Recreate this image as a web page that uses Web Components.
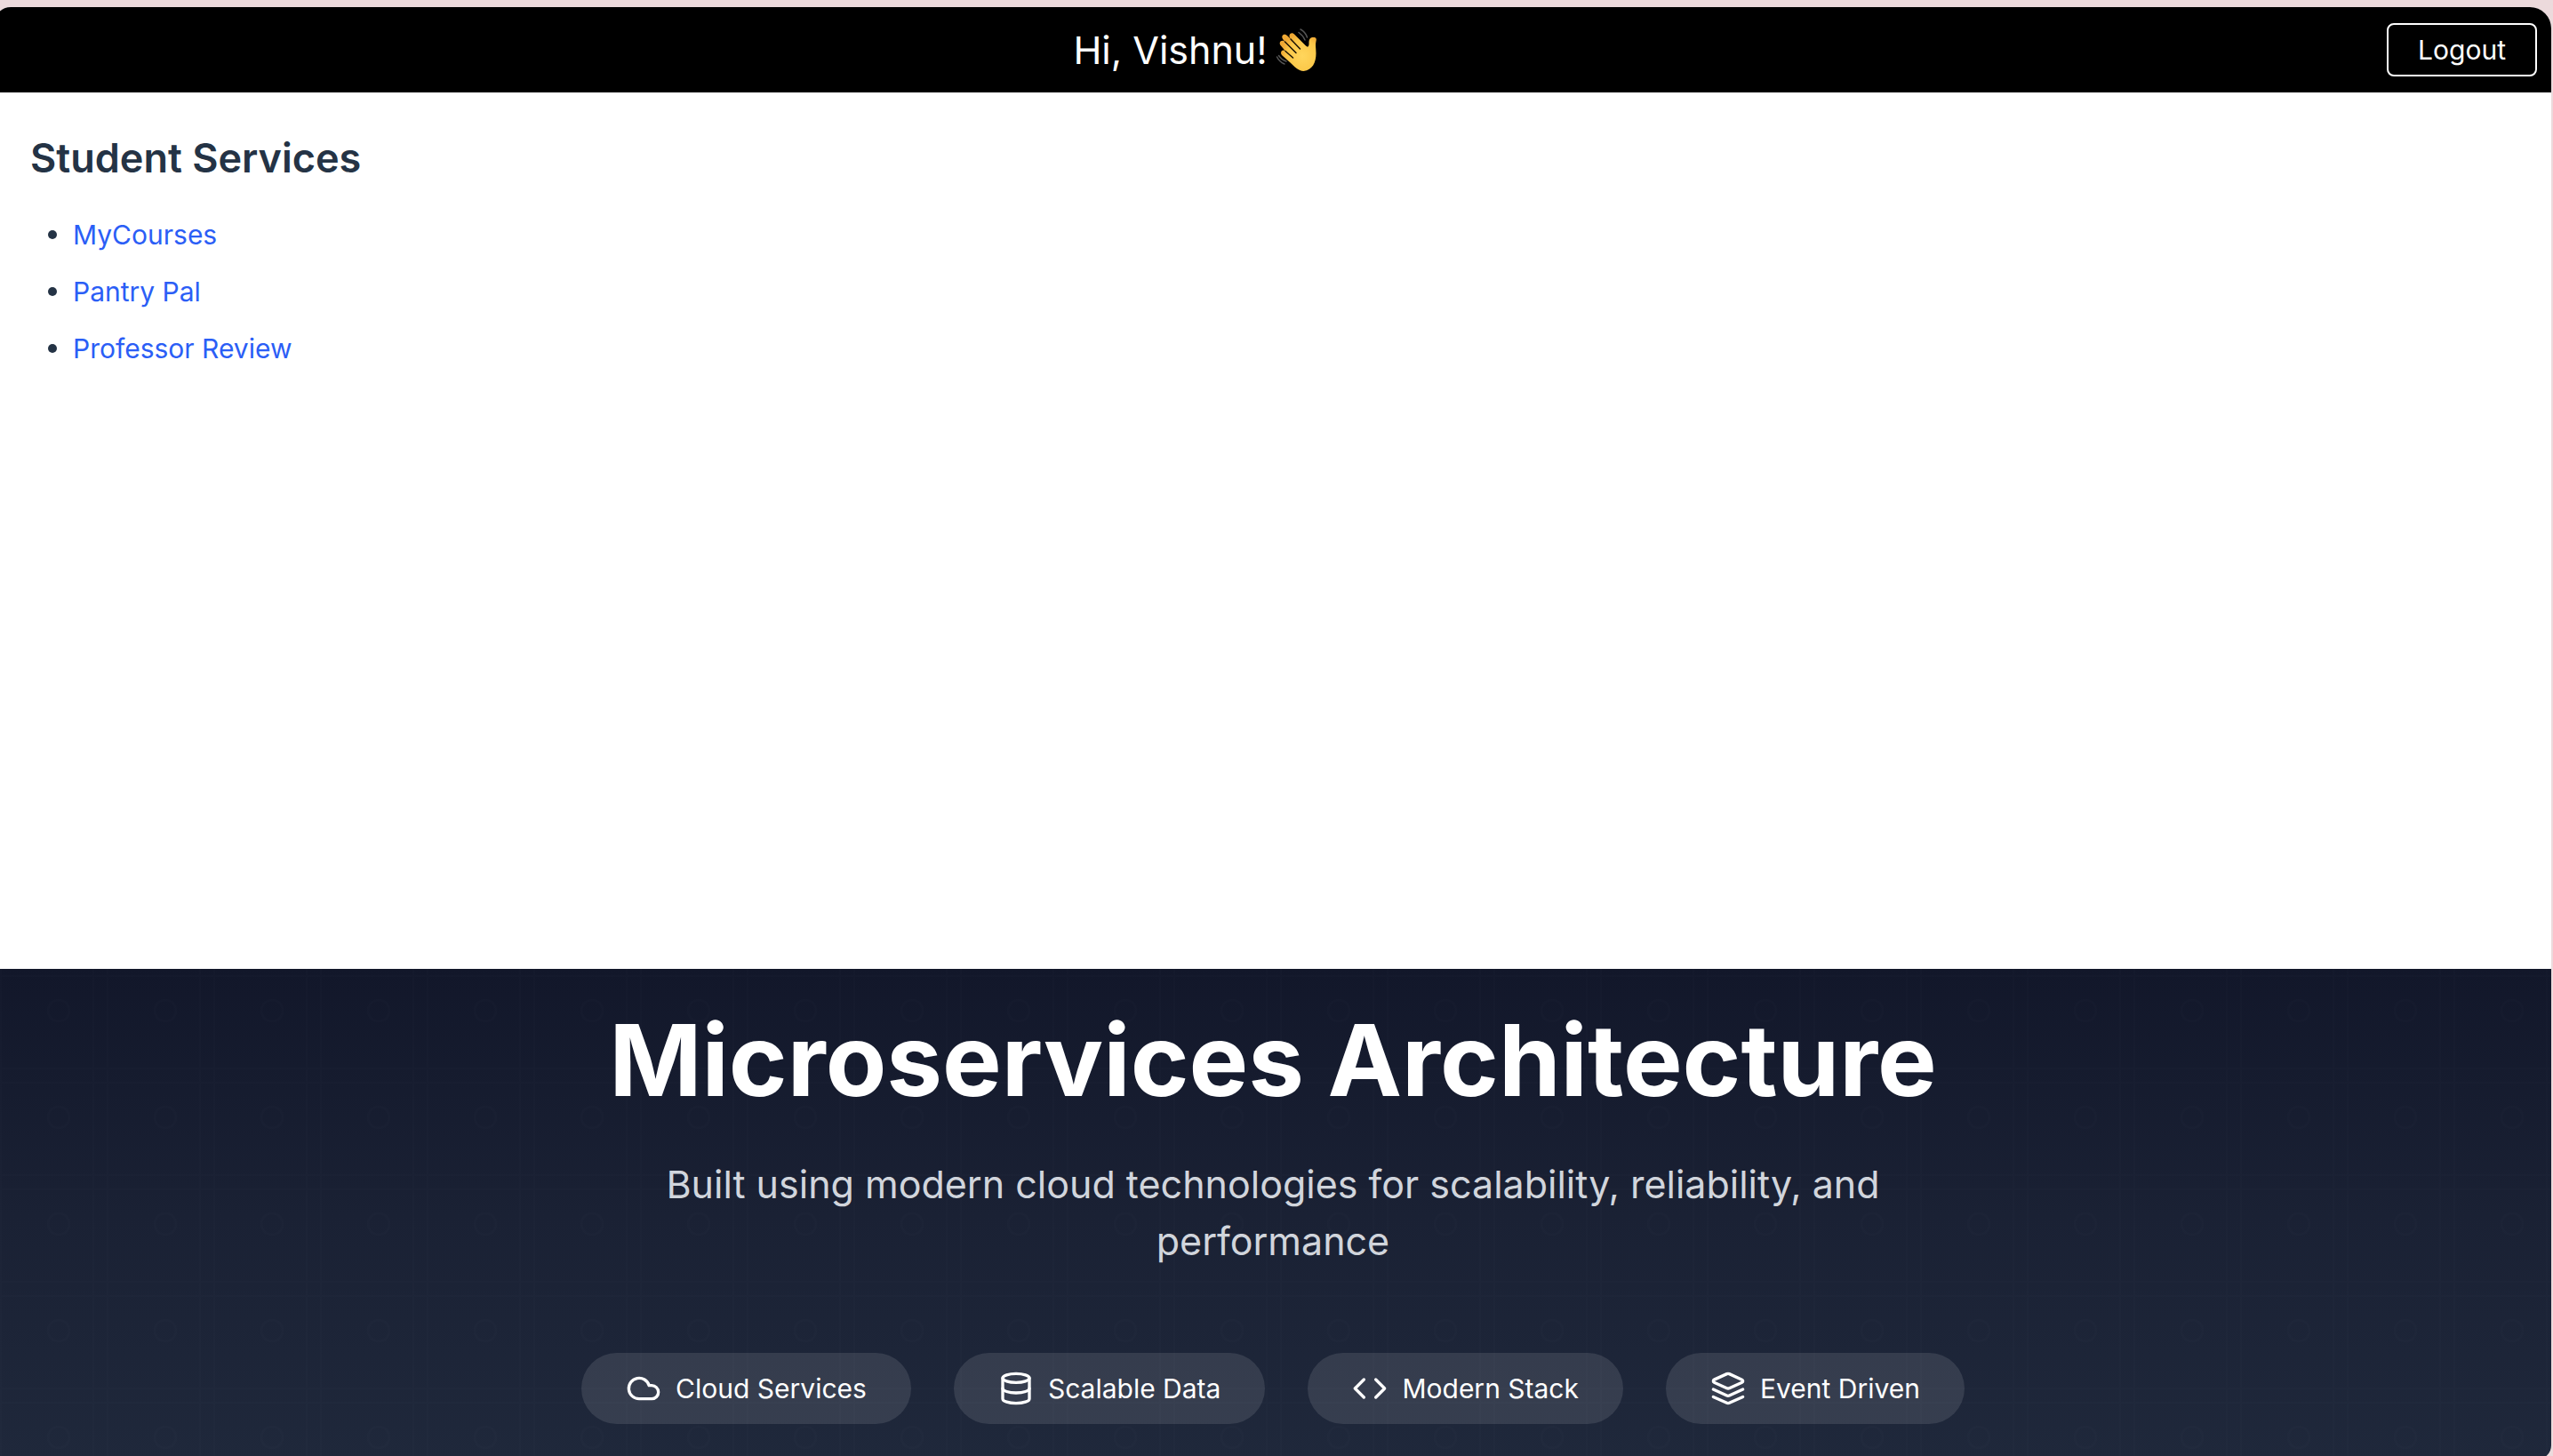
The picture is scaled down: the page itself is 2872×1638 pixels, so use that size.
<!DOCTYPE html>
<html lang="en">
<head>
<meta charset="utf-8">
<meta name="viewport" content="width=device-width, initial-scale=1">
<title>Student Services</title>
<style>
  html { background: #ecdadc; }
  body { margin: 0; height: 100vh; overflow: hidden; font-family: Inter, "Liberation Sans", sans-serif; }
</style>
</head>
<body>
<app-window>
  <greeting-bar name="Vishnu"></greeting-bar>
  <service-list heading="Student Services">
    <service-link href="#mycourses">MyCourses</service-link>
    <service-link href="#pantry-pal">Pantry Pal</service-link>
    <service-link href="#professor-review">Professor Review</service-link>
  </service-list>
  <hero-section>
    <span slot="title">Microservices Architecture</span>
    <span slot="lead">Built using modern cloud technologies for scalability, reliability, and performance</span>
    <feature-pill icon="cloud">Cloud Services</feature-pill>
    <feature-pill icon="database">Scalable Data</feature-pill>
    <feature-pill icon="code">Modern Stack</feature-pill>
    <feature-pill icon="layers">Event Driven</feature-pill>
  </hero-section>
</app-window>

<script>
class BaseElement extends HTMLElement {
  connectedCallback() {
    if (!this.shadowRoot) this.attachShadow({ mode: "open" }).innerHTML = this.render();
  }
}

customElements.define("app-window", class extends BaseElement {
  render() {
    return `<style>
      :host { box-sizing: border-box; display: flex; flex-direction: column; height: calc(100% - 4px);
        margin: 8px 2px 0 -6px; border-radius: 18px 24px 16px 16px; overflow: hidden; background: #fff; }
    </style><slot></slot>`;
  }
});

customElements.define("greeting-bar", class extends BaseElement {
  render() {
    return `<style>
      :host { display: block; background: #000; color: #fff; }
      header { display: flex; align-items: center; padding: 18px 16px 18px 12px; }
      h1 { flex: 1; display: flex; align-items: center; justify-content: center; gap: 8px; margin: 0;
        font-size: 43px; line-height: 60px; font-weight: 400; }
      svg { width: 50px; height: 50px; }
      button { box-sizing: border-box; height: 60px; padding: 0 33px; border: 2px solid #fff; border-radius: 8px;
        background: transparent; color: inherit; font: 400 30px/56px Inter, "Liberation Sans", sans-serif; }
    </style>
    <header>
      <h1><span>Hi, ${this.getAttribute("name")}!</span>
        <svg viewBox="0 0 50 50" role="img" aria-label="waving hand">
          <defs><radialGradient id="skin" cx="0.62" cy="0.6" r="0.6">
            <stop offset="0" stop-color="#ffd65c"/><stop offset="0.7" stop-color="#fbc748"/><stop offset="1" stop-color="#efa834"/>
          </radialGradient></defs>
          <path fill="url(#skin)" d="M17 39 L8.500 31.500 C5 28 8.500 23.500 12 26.500 L7 20.500 C3.500 16.500 8 12.500 11.500 16 L9.500 13.500 C6 9 11 5.500 14.500 9.500 L18 13 C14 8 19 4 22.500 8 L35 20.500 C37.500 23 38.500 21 38.500 18 C38.500 14 39 11.500 42.500 11 C46.500 10.500 47.500 12.500 46.500 15.500 C45.500 20 46.500 23 46.500 29 C46.500 39 42.500 48 32.500 49 C26.500 49 22 43.500 17 39Z"/>
          <g fill="none" stroke="#1a1204" stroke-width="1.500" stroke-linecap="round">
            <path d="M18 13 L28.500 24"/><path d="M11.500 16 L24 28.500"/><path d="M12 26.500 L20.500 34"/>
          </g>
          <g fill="none" stroke="#555" stroke-width="1.500" stroke-linecap="round">
            <path d="M27 5.500 Q32 9 34 14"/><path d="M29 2 Q34.500 5 36.500 11"/>
            <path d="M2.500 33 Q5 38.500 11 41"/><path d="M4.500 31.500 Q8 36.500 13 38"/>
          </g>
        </svg>
      </h1>
      <button type="button">Logout</button>
    </header>`;
  }
});

customElements.define("service-list", class extends BaseElement {
  render() {
    return `<style>
      :host { display: block; flex: 1; background: #fff; color: #243345; padding: 42px 40px; }
      h2 { margin: 0 0 30px; font-size: 45px; line-height: 64px; font-weight: 600; }
      nav { display: flex; flex-direction: column; gap: 16px; padding: 0 20px; }
    </style>
    <h2>${this.getAttribute("heading")}</h2>
    <nav><slot></slot></nav>`;
  }
});

customElements.define("service-link", class extends BaseElement {
  render() {
    return `<style>
      :host { display: flex; align-items: center; gap: 18px; line-height: 48px; font-size: 30px; }
      :host::before { content: ""; width: 10px; height: 10px; border-radius: 50%; background: currentColor; }
      a { color: #2b5ef6; text-decoration: none; }
    </style><a href="${this.getAttribute("href")}"><slot></slot></a>`;
  }
});

customElements.define("hero-section", class extends BaseElement {
  render() {
    return `<style>
      :host { display: block; position: relative; color: #fff; background: linear-gradient(#12172a, #1a2134 50%, #1f283b); }
      .grid { position: absolute; inset: 0; width: 100%; height: 100%; }
      section { position: relative; display: flex; flex-direction: column; align-items: center; padding: 42px 32px 40px; text-align: center; }
      h2 { margin: 0; font-size: 112px; line-height: 120px; font-weight: 700; }
      p { margin: 48px 0 94px; max-width: 1440px; font-size: 43px; line-height: 64px; color: #d1d5dc; }
      .pills { display: flex; flex-wrap: wrap; justify-content: center; gap: 48px; }
    </style>
    <svg class="grid" aria-hidden="true">
      <defs><pattern id="tile" width="120" height="120" patternUnits="userSpaceOnUse">
        <g fill="none" stroke="#fff" stroke-opacity="0.006" stroke-width="2">
          <path d="M7 0V120M111 0V120M0 8H120M0 112H120"/><circle cx="72" cy="47" r="12"/>
        </g>
      </pattern></defs>
      <rect width="100%" height="100%" fill="url(#tile)"/>
    </svg>
    <section>
      <h2><slot name="title"></slot></h2>
      <p><slot name="lead"></slot></p>
      <div class="pills"><slot></slot></div>
    </section>`;
  }
});

const ICONS = {
  cloud: `<path d="M17.5 19H9a7 7 0 1 1 6.71-9h1.79a4.5 4.5 0 1 1 0 9Z"/>`,
  database: `<ellipse cx="12" cy="5" rx="9" ry="3"/><path d="M3 5V19A9 3 0 0 0 21 19V5"/><path d="M3 12A9 3 0 0 0 21 12"/>`,
  code: `<polyline points="16 18 22 12 16 6"/><polyline points="8 6 2 12 8 18"/>`,
  layers: `<path d="m12.83 2.18a2 2 0 0 0-1.66 0L2.6 6.08a1 1 0 0 0 0 1.83l8.58 3.91a2 2 0 0 0 1.66 0l8.58-3.9a1 1 0 0 0 0-1.83Z"/><path d="m22 17.65-9.17 4.16a2 2 0 0 1-1.66 0L2 17.65"/><path d="m22 12.65-9.17 4.16a2 2 0 0 1-1.66 0L2 12.65"/>`
};

customElements.define("feature-pill", class extends BaseElement {
  render() {
    return `<style>
      :host { display: flex; align-items: center; gap: 16px; padding: 16px 50px; border-radius: 40px;
        background: rgba(255, 255, 255, 0.11); font-size: 30px; line-height: 48px; }
      svg { width: 40px; height: 40px; fill: none; stroke: currentColor; stroke-width: 2; stroke-linecap: round; stroke-linejoin: round; }
    </style>
    <svg viewBox="0 0 24 24" aria-hidden="true">${ICONS[this.getAttribute("icon")]}</svg><span><slot></slot></span>`;
  }
});
</script>
</body>
</html>
